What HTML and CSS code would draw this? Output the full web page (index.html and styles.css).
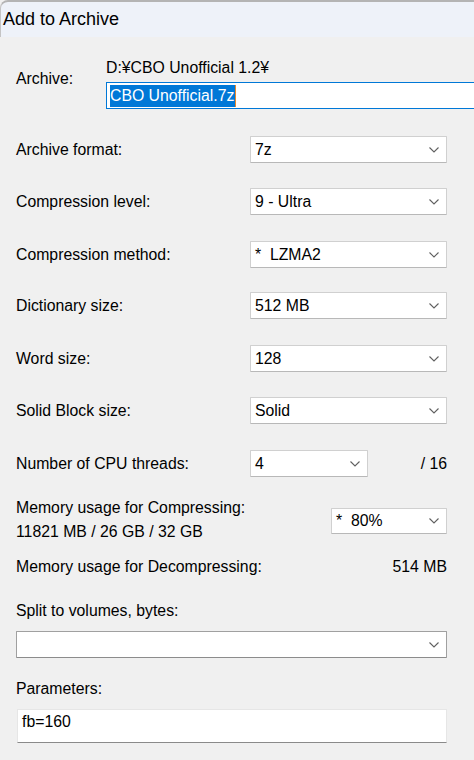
FILE: index.html
```html
<!DOCTYPE html>
<html>
<head>
<meta charset="utf-8">
<link rel="stylesheet" href="styles.css">
</head>
<body>
<div class="titlebar"><span class="title">Add to Archive</span></div>
<div class="content">
  <div class="archive">
    <div class="archive-label">Archive:</div>
    <div class="archive-field">
      <div class="path">D:¥CBO Unofficial 1.2¥</div>
      <div class="name-input"><span class="sel">CBO Unofficial.7z</span><span class="caret"></span></div>
    </div>
  </div>

  <div class="row first">
    <span class="label">Archive format:</span>
    <div class="select wide"><span class="val">7z</span><svg class="chev" width="10" height="6" viewBox="0 0 10 6"><path d="M0.5 0.5 L5 5 L9.5 0.5" /></svg></div>
  </div>
  <div class="row r2">
    <span class="label">Compression level:</span>
    <div class="select wide"><span class="val">9 - Ultra</span><svg class="chev" width="10" height="6" viewBox="0 0 10 6"><path d="M0.5 0.5 L5 5 L9.5 0.5" /></svg></div>
  </div>
  <div class="row r3">
    <span class="label">Compression method:</span>
    <div class="select wide"><span class="val">*&nbsp; LZMA2</span><svg class="chev" width="10" height="6" viewBox="0 0 10 6"><path d="M0.5 0.5 L5 5 L9.5 0.5" /></svg></div>
  </div>
  <div class="row r4">
    <span class="label">Dictionary size:</span>
    <div class="select wide"><span class="val">512 MB</span><svg class="chev" width="10" height="6" viewBox="0 0 10 6"><path d="M0.5 0.5 L5 5 L9.5 0.5" /></svg></div>
  </div>
  <div class="row r5">
    <span class="label">Word size:</span>
    <div class="select wide"><span class="val">128</span><svg class="chev" width="10" height="6" viewBox="0 0 10 6"><path d="M0.5 0.5 L5 5 L9.5 0.5" /></svg></div>
  </div>
  <div class="row r6">
    <span class="label">Solid Block size:</span>
    <div class="select wide"><span class="val">Solid</span><svg class="chev" width="10" height="6" viewBox="0 0 10 6"><path d="M0.5 0.5 L5 5 L9.5 0.5" /></svg></div>
  </div>
  <div class="row cpu">
    <span class="label">Number of CPU threads:</span>
    <div class="select narrow"><span class="val">4</span><svg class="chev" width="10" height="6" viewBox="0 0 10 6"><path d="M0.5 0.5 L5 5 L9.5 0.5" /></svg></div>
    <span class="right">/ 16</span>
  </div>

  <div class="mem">
    <div class="mem-label">Memory usage for Compressing:<br>11821 MB / 26 GB / 32 GB</div>
    <div class="select mem-select"><span class="val">*&nbsp; 80%</span><svg class="chev" width="10" height="6" viewBox="0 0 10 6"><path d="M0.5 0.5 L5 5 L9.5 0.5" /></svg></div>
  </div>
  <div class="decomp">
    <span>Memory usage for Decompressing:</span>
    <span>514 MB</span>
  </div>

  <div class="block-label split-label">Split to volumes, bytes:</div>
  <div class="select full"><span class="val"></span><svg class="chev" width="10" height="6" viewBox="0 0 10 6"><path d="M0.5 0.5 L5 5 L9.5 0.5" /></svg></div>

  <div class="block-label params-label">Parameters:</div>
  <div class="params">fb=160</div>
</div>
</body>
</html>
```

FILE: styles.css
```css
html, body {
  margin: 0;
  padding: 0;
}
body {
  background: #f0f0f0;
  font-family: "Liberation Sans", Arial, sans-serif;
  font-size: 15.8px;
  color: #000;
  width: 474px;
  height: 760px;
  overflow: hidden;
}
.titlebar {
  height: 35px;
  background: #eef2f9;
  border-top: 2px solid #b4b4b4;
  border-left: 1px solid #c4c4c4;
  border-top-left-radius: 8px;
  display: flex;
  align-items: center;
  padding-left: 2px;
}
.title {
  font-size: 18px;
  line-height: 22px;
  margin-top: -1px;
}
.content {
  padding: 0 27px 0 16px;
}
.archive {
  display: flex;
  margin-top: 22px;
  margin-right: -40px;
}
.archive-label {
  width: 90px;
  padding-top: 11px;
  line-height: 18px;
}
.archive-field {
  flex: 1;
}
.path {
  line-height: 18px;
}
.name-input {
  margin-top: 5px;
  height: 25px;
  border: 1px solid #0078d7;
  background: #fff;
  display: flex;
  align-items: center;
  padding-left: 3px;
}
.sel {
  background: #0078d7;
  color: #fff;
  line-height: 22px;
  padding-right: 1px;
}
.caret {
  width: 1px;
  height: 22px;
  background: #e8892c;
}
.row {
  display: flex;
  align-items: center;
  height: 27px;
  margin-top: 25px;
}
.row.first {
  margin-top: 27px;
}
.row.r3 {
  margin-top: 26px;
}
.row.r4 {
  margin-top: 24px;
}
.row.r5 {
  margin-top: 26px;
}
.row.cpu {
  margin-top: 26px;
}
.label {
  width: 234px;
  flex: none;
}
.select {
  box-sizing: border-box;
  height: 27px;
  background: #fff;
  border: 1px solid #d0d0d0;
  border-bottom-color: #b8b8b8;
  border-radius: 1px;
  display: flex;
  align-items: center;
  padding: 0 7px 0 4px;
}
.val {
  flex: 1;
  white-space: pre;
  line-height: 18px;
}
.chev {
  flex: none;
  display: block;
}
.chev path {
  fill: none;
  stroke: #606060;
  stroke-width: 1.1;
}
.select.wide {
  width: 197px;
}
.select.narrow {
  width: 118px;
}
.right {
  margin-left: auto;
}
.mem {
  display: flex;
  align-items: flex-start;
  margin-top: 19px;
}
.mem-label {
  line-height: 24px;
  flex: 1;
}
.mem-select {
  width: 116px;
  margin-top: 12px;
  height: 26px;
}
.decomp {
  display: flex;
  justify-content: space-between;
  line-height: 24px;
  margin-top: 11px;
}
.block-label {
  line-height: 24px;
}
.split-label {
  margin-top: 20px;
}
.select.full {
  width: 431px;
  height: 27px;
  margin-top: 8px;
  border-color: #a0a0a0;
  border-bottom-color: #8c8c8c;
}
.params-label {
  margin-top: 19px;
}
.params {
  box-sizing: border-box;
  margin-top: 8px;
  margin-left: 1px;
  width: 430px;
  height: 34px;
  background: #fff;
  border: 1px solid #e6e6e6;
  border-bottom: 1px solid #8a8a8a;
  padding: 2px 0 0 4px;
  line-height: 20px;
}
```
